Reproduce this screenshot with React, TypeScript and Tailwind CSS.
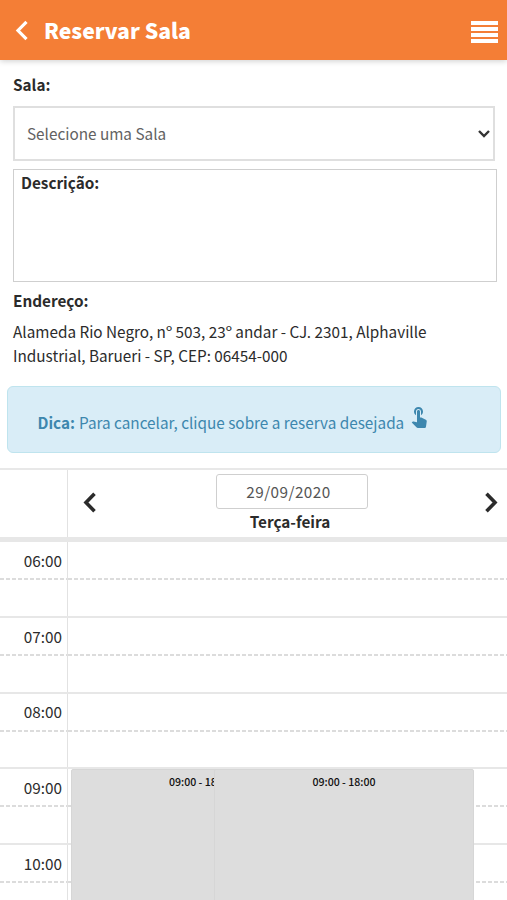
import React from 'react';
import { MdTouchApp } from 'react-icons/md';

interface Booking {
  id: number;
  label: string;
  className: string;
}

const HOURS = ['06:00', '07:00', '08:00', '09:00', '10:00'];

const BOOKINGS: Booking[] = [
  { id: 1, label: '09:00 - 18:00', className: 'left-0 w-[260px]' },
  { id: 2, label: '09:00 - 18:00', className: 'left-[143.5px] w-[260px]' },
];

interface ChevronProps {
  direction: 'left' | 'right' | 'down';
  className: string;
  strokeWidth: number;
}

const POINTS = {
  left: '11.5,1.8 3,10.5 11.5,19.2',
  right: '2.5,1.8 11,10.5 2.5,19.2',
  down: '2,3 7,8 12,3',
};

const Chevron: React.FC<ChevronProps> = ({ direction, className, strokeWidth }) => (
  <svg
    viewBox={direction === 'down' ? '0 0 14 11' : '0 0 14 21'}
    className={className}
    fill="none"
    stroke="currentColor"
    strokeWidth={strokeWidth}
  >
    <polyline points={POINTS[direction]} />
  </svg>
);

const Header: React.FC = () => (
  <header className="relative z-10 flex h-[60px] items-center bg-[#f47e36] pl-[15px] pr-[9px] text-white shadow-[0_1px_6px_rgba(0,0,0,0.2)]">
    <button aria-label="Voltar">
      <Chevron direction="left" strokeWidth={3.2} className="h-[21px] w-[14px]" />
    </button>
    <h1 className="ml-[15px] text-[21.2px] leading-8 font-black">Reservar Sala</h1>
    <button aria-label="Menu" className="mt-1 ml-auto flex w-[27px] flex-col gap-[2px]">
      <span className="h-[4px] bg-white" />
      <span className="h-[4px] bg-white" />
      <span className="h-[4px] bg-white" />
      <span className="h-[4px] bg-white" />
    </button>
  </header>
);

const RoomForm: React.FC = () => (
  <section className="px-[13px] pt-3">
    <div className="h-[34px] leading-6 font-bold">Sala:</div>
    <div className="flex h-[55px] w-[482px] items-center justify-between border-2 border-[#dfdfdf] pr-[2px] pb-px pl-3 text-[#626262]">
      <span>Selecione uma Sala</span>
      <Chevron direction="down" strokeWidth={2.4} className="h-[11px] w-[14px] text-[#333]" />
    </div>
    <div className="mt-2 h-[113px] w-[484px] border-[1.5px] border-[#cfcfcf] px-[7px] leading-6 font-bold">
      Descrição:
    </div>
    <div className="mt-[6px] leading-6 font-bold">Endereço:</div>
    <p className="mt-[6.5px] leading-[24.6px]">
      Alameda Rio Negro, nº 503, 23º andar - CJ. 2301, Alphaville
      <br />
      Industrial, Barueri - SP, CEP: 06454-000
    </p>
  </section>
);

const Tip: React.FC = () => (
  <div className="mt-[18.3px] ml-[7px] flex h-[67px] w-[494px] items-center rounded-[6px] border border-[#bfe4ee] bg-[#d9edf7] pt-1.5 pl-[29.5px] text-[#3d87ae]">
    <strong className="font-bold">Dica:</strong>
    <span className="ml-1">Para cancelar, clique sobre a reserva desejada</span>
    <MdTouchApp className="mb-3 ml-[3px] size-6" />
  </div>
);

const DayHeader: React.FC = () => (
  <div className="mt-[15px] flex h-[69px] border-t-2 border-[#e8e8e8]">
    <div className="w-[68px] border-r-[1.5px] border-[#e2e2e2]" />
    <div className="flex flex-1 justify-between pr-[9.5px] pl-[14.5px]">
      <button aria-label="Dia anterior" className="pb-0.5">
        <Chevron direction="left" strokeWidth={3.6} className="h-[21px] w-[14px]" />
      </button>
      <div className="flex flex-col items-center pt-1 pl-1">
        <div className="flex h-[35px] w-[152px] items-center justify-center rounded-[3px] border-[1.5px] border-[#cfcfcf] pr-[7px] tracking-[0.45px] text-[#555]">
          29/09/2020
        </div>
        <div className="pr-1 leading-6 font-bold">Terça-feira</div>
      </div>
      <button aria-label="Próximo dia" className="pb-0.5">
        <Chevron direction="right" strokeWidth={3.6} className="h-[21px] w-[14px]" />
      </button>
    </div>
  </div>
);

const Schedule: React.FC = () => (
  <div className="relative border-t-[5px] border-[#e7e7e7] pt-[0.4px]">
    {HOURS.map((hour) => (
      <div key={hour} className="flex h-[75.7px] border-b-2 border-[#e7e7e7]">
        <div className="flex w-[68px] flex-col border-r-[1.5px] border-[#e2e2e2]">
          <div className="h-[36px] pt-[5.5px] pr-[5px] text-right leading-6">{hour}</div>
          <div className="h-[2px] bg-[repeating-linear-gradient(90deg,#dcdcdc_0_4px,transparent_4px_6px)]" />
        </div>
        <div className="flex-1 pt-[36px]">
          <div className="h-[2px] bg-[repeating-linear-gradient(90deg,#dcdcdc_0_4px,transparent_4px_6px)]" />
        </div>
      </div>
    ))}

    <div className="absolute top-[226.7px] left-[70.5px] h-[690px] w-[404px] text-[10.6px]">
      {BOOKINGS.map((booking) => (
        <div
          key={booking.id}
          className={`absolute top-0 h-full rounded-[2px] border border-[#d6d6d6] bg-[#ddd] pt-0.5 text-center leading-5 font-medium text-[#111] ${booking.className}`}
        >
          {booking.label}
        </div>
      ))}
    </div>
  </div>
);

const App: React.FC = () => {
  return (
    <div className="h-[900px] w-[507px] overflow-hidden bg-white font-['Noto_Sans_CJK_SC','Noto_Sans',sans-serif] text-[15.3px] text-[#2b2b2b]">
      <Header />
      <RoomForm />
      <Tip />
      <DayHeader />
      <Schedule />
    </div>
  );
};

export default App;
